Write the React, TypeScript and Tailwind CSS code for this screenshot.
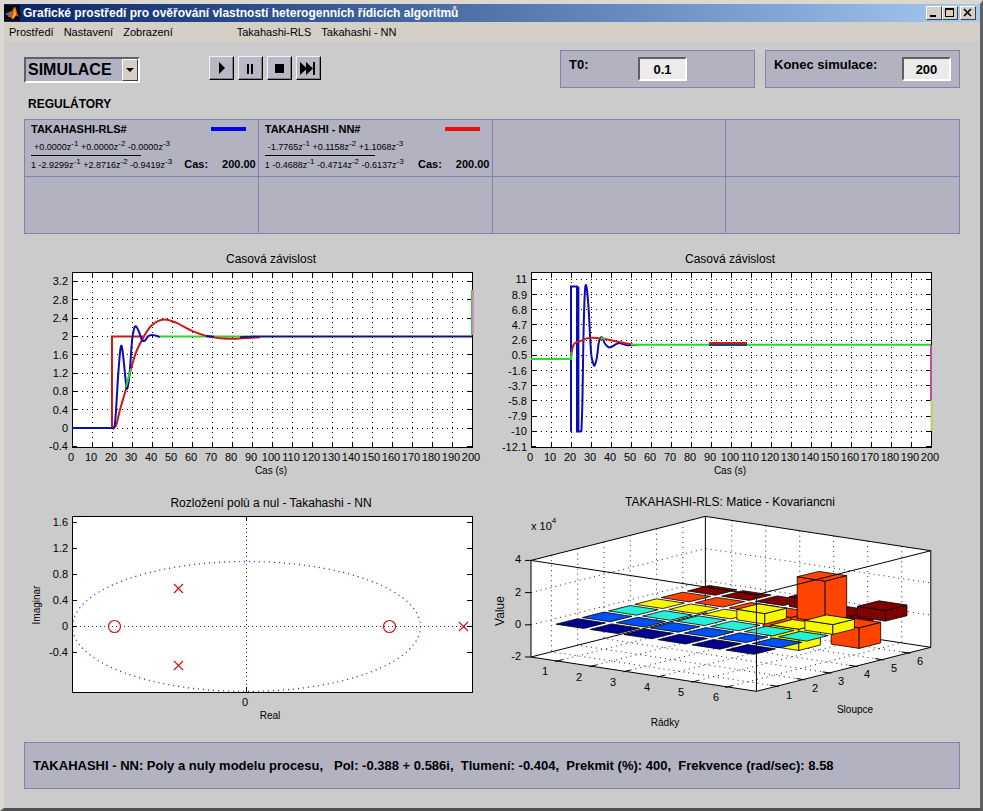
import type { ReactNode } from 'react';

type Point = [number, number];

const RED = '#d01818';
const BLUE = '#0c0cb4';
const GREEN = '#28d830';

const controllers = [
  {
    name: 'TAKAHASHI-RLS#',
    swatch: 'bg-[#0000f0]',
    numerator: ['+0.0000', ' +0.0000', ' -0.0000'],
    denominator: ['1 -2.9299', ' +2.8716', ' -0.9419'],
    time: '200.00',
  },
  {
    name: 'TAKAHASHI - NN#',
    swatch: 'bg-[#f00c0c]',
    numerator: ['-1.7765', ' +0.1158', ' +1.1068'],
    denominator: ['1 -0.4688', ' -0.4714', ' -0.6137'],
    time: '200.00',
  },
];

// Catmull-Rom spline through the given points
function curve(points: Point[]) {
  let d = `M${points[0][0]} ${points[0][1]}`;
  for (let i = 0; i < points.length - 1; i++) {
    const p0 = points[Math.max(i - 1, 0)];
    const p1 = points[i];
    const p2 = points[i + 1];
    const p3 = points[Math.min(i + 2, points.length - 1)];
    d += `C${p1[0] + (p2[0] - p0[0]) / 6} ${p1[1] + (p2[1] - p0[1]) / 6} ${p2[0] - (p3[0] - p1[0]) / 6} ${p2[1] - (p3[1] - p1[1]) / 6} ${p2[0]} ${p2[1]}`;
  }
  return d;
}

function line(points: Point[]) {
  return 'M' + points.map((p) => p.join(' ')).join('L');
}

function Polynomial({ terms }: { terms: string[] }) {
  return (
    <span className="whitespace-pre text-[9px] leading-3">
      {terms.map((term, i) => (
        <span key={i}>
          {term}z<sup className="text-[8px] leading-none">-{i + 1}</sup>
        </span>
      ))}
    </span>
  );
}

function ControllerCell({ controller }: { controller?: (typeof controllers)[number] }) {
  return (
    <div className="h-[57px] border-r border-b border-[#8282b2] px-1.5 pt-[3px]">
      {controller && (
        <>
          <div className="flex h-3 items-center justify-between pr-1.5 text-[11px] font-bold">
            <span>{controller.name}</span>
            <span className={`h-1 w-[35px] ${controller.swatch}`} />
          </div>
          <div className="mt-1 flex h-4 items-center pl-[3px]">
            <Polynomial terms={controller.numerator} />
          </div>
          <div className="h-px w-[110px] bg-black" />
          <div className="flex h-[17px] items-center justify-between">
            <Polynomial terms={controller.denominator} />
            <span className="-mr-1 flex gap-3.5 text-[11px] font-bold">
              <span>Cas:</span>
              <span>{controller.time}</span>
            </span>
          </div>
        </>
      )}
    </div>
  );
}

function TimeChart({
  left,
  zero,
  unit,
  ticks,
  children,
}: {
  left: number;
  zero: number;
  unit: number;
  ticks: number[];
  children: ReactNode;
}) {
  const seconds = Array.from({ length: 21 }, (_, i) => i * 10);
  return (
    <svg viewBox="0 0 468 236" className="block w-full" fontSize="11">
      <g transform={`translate(${left} 24)`}>
        <text x="199" y="-9" textAnchor="middle" fontSize="12">Casová závislost</text>
        <rect width="400" height="175" fill="#fff" />
        <g stroke="#000" shapeRendering="crispEdges">
          {seconds.slice(1, -1).map((s) => (
            <g key={s}>
              <path d={`M${s * 2 + 0.5} 0V175`} strokeDasharray="1 4" />
              <path d={`M${s * 2 + 0.5} 0v5M${s * 2 + 0.5} 170v5`} />
            </g>
          ))}
          {ticks.map((v) => {
            const y = Math.floor(zero - v * unit) + 0.5;
            return (
              <g key={v}>
                {y < 173 && <path d={`M0 ${y}H400`} strokeDasharray="1 4" />}
                <path d={`M0 ${y}h5M395 ${y}h5`} />
              </g>
            );
          })}
          <rect x="0.5" y="0.5" width="400" height="175" fill="none" />
        </g>
        {ticks.map((v) => (
          <text key={v} x="-4" y={Math.round(zero - v * unit) + 4} textAnchor="end">{v}</text>
        ))}
        {seconds.map((s) => (
          <text key={s} x={s * 2 - 1} y="189" textAnchor="middle">{s}</text>
        ))}
        <text x="199" y="202" textAnchor="middle" fontSize="10">Cas (s)</text>
        <g fill="none" strokeWidth="2">{children}</g>
      </g>
    </svg>
  );
}

function OutputChart() {
  const at = (points: Point[]): Point[] => points.map(([t, v]) => [t * 2, 156 - v * 45.8]);
  return (
    <TimeChart left={48} zero={156} unit={45.8} ticks={[3.2, 2.8, 2.4, 2, 1.6, 1.2, 0.8, 0.4, 0, -0.4]}>
      <path d={line(at([[20, 0], [20, 2], [36, 2]]))} stroke={RED} />
      <path d={line(at([[44, 2], [88, 2]]))} stroke={GREEN} />
      <path
        d={curve(at([[20, 0], [22, 0.05], [24, 0.4], [27, 0.85], [29, 1.2], [32, 1.65], [36, 2], [40, 2.25], [46, 2.37], [52, 2.3], [60, 2.12], [68, 2], [74, 1.96], [82, 1.95], [94, 1.98]]))}
        stroke={RED}
      />
      <path
        d={curve(at([[20, 0], [21.5, 0.1], [23, 1.1], [24.2, 1.72], [25, 1.76], [26, 1.4], [27.2, 0.9], [28, 0.92], [29, 1.3], [30, 1.9], [31, 2.16], [32, 2.22], [33.5, 2.1], [35, 1.92], [36.5, 1.91], [38, 2], [40, 2.03], [44, 1.99]]))}
        stroke={BLUE}
      />
      <path d={line(at([[27, 0.9], [29.5, 1.3]]))} stroke={GREEN} />
      <path d={line(at([[0, 0], [20, 0]]))} stroke={BLUE} />
      <path d={line(at([[67, 2.01], [71, 1.99]]))} stroke={BLUE} />
      <path d={line(at([[84, 1.98], [90, 2], [200, 2]]))} stroke="#101878" />
      <path d="M399.5 18V63" stroke={GREEN} strokeWidth="1" />
      <path d="M401 18V63" stroke="#c890b8" />
    </TimeChart>
  );
}

function InputChart() {
  const at = (points: Point[]): Point[] => points.map(([t, v]) => [t * 2, 87 - v * 7.24]);
  return (
    <TimeChart left={39} zero={87} unit={7.24} ticks={[11, 8.9, 6.8, 4.7, 2.6, 0.5, -1.6, -3.7, -5.8, -7.9, -10, -12.1]}>
      <path d={line(at([[20, -10], [20, 10], [23, 10], [23, -10], [25.2, -10]]))} stroke={BLUE} />
      <path d={line(at([[23.7, 10], [23.7, -10]]))} stroke={BLUE} />
      <path
        d={curve(at([[25.2, -10], [25.7, -6], [26.3, 4], [27, 9.5], [27.8, 9.9], [28.8, 7], [30, 1], [31, -0.5], [31.8, -0.9], [33, 0.3], [34, 2.4], [35.5, 3], [37, 2.1], [39, 1.6], [41, 1.8], [44, 2.2], [48, 1.9], [53, 1.97]]))}
        stroke={BLUE}
      />
      <path
        d={curve(at([[20, 0], [20.8, 1.6], [22, 2.2], [25, 2.5], [28, 2.85], [31, 2.95], [36, 2.8], [40, 2.6], [46, 2.25], [51, 2]]))}
        stroke={RED}
      />
      <path d={line(at([[0, 0], [20, 0], [20.3, 1]]))} stroke={GREEN} />
      <path d={line(at([[35, 2.9], [37, 2.8]]))} stroke={GREEN} />
      <path d={line(at([[50, 1.97], [200, 1.97]]))} stroke={GREEN} />
      <path d="M178 71H216" stroke={RED} />
      <path d="M178 73H216" stroke="#10487c" />
      <path d="M400 73V128" stroke="#c848a8" />
      <path d="M400.5 128V159" stroke="#c8c860" />
    </TimeChart>
  );
}

function PoleZeroChart() {
  const ticks = [1.6, 1.2, 0.8, 0.4, 0, -0.4];
  const poles: Point[] = [[106, 72], [106, 149], [391, 110]];
  return (
    <svg viewBox="0 0 468 250" className="block w-full" fontSize="11">
      <defs>
        <clipPath id="pole-area">
          <rect width="400" height="176" />
        </clipPath>
      </defs>
      <g transform="translate(48 32)">
        <text x="199" y="-9" textAnchor="middle" fontSize="12">Rozložení polù a nul - Takahashi - NN</text>
        <rect width="400" height="176" fill="#fff" />
        <g fill="none" stroke="#1c1cc8" clipPath="url(#pole-area)">
          <ellipse cx="174.5" cy="110.5" rx="174" ry="65" strokeDasharray="1 4" strokeWidth="1.3" />
          <path d="M0 110.5H400M174.5 0V176" strokeDasharray="1 3" shapeRendering="crispEdges" />
        </g>
        <g fill="none" stroke="#000" shapeRendering="crispEdges">
          {ticks.map((v) => (
            <path key={v} d={`M0 ${110.5 - v * 65}h5M395 ${110.5 - v * 65}h5`} />
          ))}
          <path d="M174.5 0v5M174.5 171v5" />
          <rect x="0.5" y="0.5" width="400" height="176" />
        </g>
        {ticks.map((v) => (
          <text key={v} x="-4" y={114 - v * 65} textAnchor="end">{v}</text>
        ))}
        <text x="173" y="190" textAnchor="middle">0</text>
        <text x="198" y="203" textAnchor="middle" fontSize="10">Real</text>
        <text transform="translate(-32 89) rotate(-90)" textAnchor="middle" fontSize="10">Imaginar</text>
        <g fill="none" stroke="#c41818" strokeWidth="1.2">
          <circle cx="42.5" cy="110.5" r="6" />
          <circle cx="317.5" cy="110.5" r="6" />
          {poles.map(([x, y]) => (
            <path key={`${x}-${y}`} d={`M${x - 4} ${y - 4}l9 9M${x + 5} ${y - 4}l-9 9`} />
          ))}
        </g>
      </g>
    </svg>
  );
}

const columnColors = ['#000090', '#0050f8', '#28f0d8', '#f8f800', '#ff4400', '#800000'];

// Covariance values that stand out of the zero plane, keyed by row-column
const covariance: Record<string, number> = {
  '4-4': 0.65,
  '4-5': -1.32,
  '5-4': -1.32,
  '4-6': 0.61,
  '6-4': 0.61,
  '5-5': 2.58,
  '5-6': -1.28,
  '6-5': -1.28,
  '6-6': 0.66,
};

function project(row: number, column: number, z: number): Point {
  return [39 + 34 * row + 26.3 * column, 173 + 5.18 * row - 6.64 * column - 16.1 * (z + 2)];
}

function polygon(points: Point[]) {
  return points.map(([x, y]) => `${x.toFixed(1)},${y.toFixed(1)}`).join(' ');
}

function Bar({ row, column }: { row: number; column: number }) {
  const z = covariance[`${row}-${column}`] ?? 0;
  const top = Math.max(z, 0);
  const bottom = Math.min(z, 0);
  const r = row - 0.175;
  const c = column - 0.175;
  const h = 0.41;
  return (
    <g fill={columnColors[column - 1]} stroke="#000" strokeWidth="0.8" strokeLinejoin="round">
      {z !== 0 && (
        <>
          <polygon points={polygon([project(r - h, c - h, top), project(r + h, c - h, top), project(r + h, c - h, bottom), project(r - h, c - h, bottom)])} />
          <polygon points={polygon([project(r + h, c - h, top), project(r + h, c + h, top), project(r + h, c + h, bottom), project(r + h, c - h, bottom)])} />
        </>
      )}
      <polygon points={polygon([project(r - h, c - h, top), project(r + h, c - h, top), project(r + h, c + h, top), project(r - h, c + h, top)])} />
    </g>
  );
}

function CovarianceChart() {
  const size = 6.63;
  const steps = [1, 2, 3, 4, 5, 6];
  const offset = 0.225;
  const rowLabels: Point[] = [[53, 191], [87, 197], [121, 202], [155, 207], [189, 212], [224, 217]];
  const columnLabels: Point[] = [[297, 215], [323, 208], [349, 201], [375, 194], [402, 188], [428, 181]];
  return (
    <svg viewBox="0 0 468 250" className="block w-full overflow-visible" fontSize="11">
      <text x="238" y="22" textAnchor="middle" fontSize="12">TAKAHASHI-RLS: Matice - Kovariancni</text>
      <polygon
        fill="#fff"
        points={polygon([project(0, 0, 4), project(0, size, 4), project(size, size, 4), project(size, size, -2), project(size, 0, -2), project(0, 0, -2)])}
      />
      <g fill="none" stroke="#222" strokeDasharray="1 4">
        {steps.map((n) => {
          const p = n - offset;
          return (
            <g key={n}>
              <path d={line([project(0, p, 4), project(0, p, -2), project(size, p, -2)])} />
              <path d={line([project(p, size, 4), project(p, size, -2), project(p, 0, -2)])} />
            </g>
          );
        })}
        {[0, 2].map((z) => (
          <path key={z} d={line([project(0, 0, z), project(0, size, z), project(size, size, z)])} />
        ))}
      </g>
      <g fill="none" stroke="#000">
        <path d={line([project(0, 0, 4), project(0, size, 4), project(size, size, 4), project(size, size, -2), project(0, size, -2), project(0, size, 4)])} />
        <path d={line([project(0, size, -2), project(0, 0, -2), project(size, 0, -2), project(size, size, -2)])} />
        {steps.map((n) => {
          const p = n - offset;
          return (
            <g key={n}>
              <path d={line([project(p, -0.08, -2), project(p, 0.2, -2)])} />
              <path d={line([project(size - 0.2, p, -2), project(size + 0.06, p, -2)])} />
            </g>
          );
        })}
      </g>
      {[6, 5, 4, 3, 2, 1].map((column) =>
        steps.map((row) => <Bar key={`${row}-${column}`} row={row} column={column} />),
      )}
      <g fill="none" stroke="#000">
        <path d={line([project(0, 0, -2), project(0, 0, 4), project(size, 0, 4), project(size, size, 4)])} />
        <path d={line([project(size, 0, 4), project(size, 0, -2)])} />
        {[4, 2, 0, -2].map((z) => (
          <path key={z} d={line([[33, project(0, 0, z)[1]], [39, project(0, 0, z)[1]]])} />
        ))}
      </g>
      {[4, 2, 0, -2].map((z) => (
        <text key={z} x="29" y={Math.round(project(0, 0, z)[1]) + 3} textAnchor="end">{z}</text>
      ))}
      {steps.map((n, i) => (
        <g key={n} textAnchor="middle">
          <text x={rowLabels[i][0]} y={rowLabels[i][1]}>{n}</text>
          <text x={columnLabels[i][0]} y={columnLabels[i][1]}>{n}</text>
        </g>
      ))}
      <text x="39" y="46">
        x 10
        <tspan dy="-7" fontSize="8">4</tspan>
      </text>
      <text transform="translate(12 127) rotate(-90)" textAnchor="middle" fontSize="12">Value</text>
      <text x="173" y="242" textAnchor="middle" fontSize="10">Rádky</text>
      <text x="363" y="229" textAnchor="middle" fontSize="10">Sloupce</text>
    </svg>
  );
}

function WindowButton({ label, children }: { label: string; children: ReactNode }) {
  return (
    <button
      aria-label={label}
      className="h-3.5 w-4 border border-t-white border-r-[#404040] border-b-[#404040] border-l-white bg-[#d4d0c8]"
    >
      <svg viewBox="0 0 14 12" className="block h-3 w-3.5" fill="none" stroke="#000" shapeRendering="crispEdges">
        {children}
      </svg>
    </button>
  );
}

function PlayerButton({ label, children }: { label: string; children: ReactNode }) {
  return (
    <button
      aria-label={label}
      className="h-6 w-[25px] border border-t-[#f0f0f8] border-r-black border-b-black border-l-[#f0f0f8] bg-[#b8b8c6] shadow-[inset_-1px_-1px_#80808c]"
    >
      <svg viewBox="0 0 23 22" className="block h-[22px] w-[23px]">{children}</svg>
    </button>
  );
}

function NumberField({ id, value }: { id: string; value: string }) {
  return (
    <input
      id={id}
      defaultValue={value}
      className="h-6 w-[49px] border-2 border-t-[#606060] border-r-white border-b-white border-l-[#606060] bg-[#ebebeb] text-center text-[13px] font-bold outline-none"
    />
  );
}

export default function App() {
  return (
    <div className="flex min-h-screen flex-col border-t-4 border-r-3 border-b-3 border-l-4 border-t-[#dcd8d0] border-r-[#606060] border-b-[#505050] border-l-[#dcd8d0] bg-[#cbcbcb] font-['Liberation_Sans',Arial,sans-serif] text-black">
      <header className="flex h-[18px] items-center bg-linear-to-r from-[#0a246a] to-[#a6caf0] pr-1">
        <svg viewBox="0 0 16 16" className="h-4 w-4">
          <rect width="16" height="16" fill="#0a0a14" />
          <path d="M1 9l4-2 2-1 2 3-3 3z" fill="#3878a8" />
          <path d="M6 8c2-1 3-6 5-6 1 1 2 6 4 10-2-1-3-2-4 0-1 2-2 3-3 2-1-2-2-2-4-2z" fill="#d85010" />
          <path d="M11 2c-1 3-1 6-3 11 2 1 3-2 4-3z" fill="#f8b030" />
        </svg>
        <h1 className="ml-[3px] flex-1 text-[12px] font-bold text-white">
          Grafické prostředí pro ověřování vlastností heterogenních řídicích algoritmů
        </h1>
        <div className="flex">
          <WindowButton label="Minimize">
            <path d="M3 9h6" strokeWidth="2" />
          </WindowButton>
          <WindowButton label="Maximize">
            <path d="M2.5 2.5h8v7h-8zM2 2.5h9" />
            <path d="M2 2h9" strokeWidth="2" />
          </WindowButton>
          <span className="w-0.5" />
          <WindowButton label="Close">
            <path d="M3 2l7 7M10 2l-7 7" strokeWidth="1.6" shapeRendering="auto" />
          </WindowButton>
        </div>
      </header>

      <nav className="flex h-5 items-center gap-2.5 bg-[#d4d0c8] pl-[5px] text-[11px]">
        <button>Prostředí</button>
        <button>Nastavení</button>
        <button>Zobrazení</button>
        <span className="w-11" />
        <button>Takahashi-RLS</button>
        <button>Takahashi - NN</button>
      </nav>

      <main className="pt-2 pr-5 pb-[19px] pl-5">
        <div className="flex h-[38px] items-start">
          <div className="relative mt-[7px] w-[116px]">
            <select
              aria-label="Režim"
              className="h-[26px] w-full appearance-none border-2 border-t-[#606068] border-r-white border-b-white border-l-[#606068] bg-[#b2b2c2] pl-0.5 text-[16px] leading-5 font-bold outline-none"
            >
              <option>SIMULACE</option>
            </select>
            <span className="pointer-events-none absolute top-0.5 right-0.5 flex h-[22px] w-4 items-center justify-center border border-t-white border-r-[#404040] border-b-[#404040] border-l-white bg-[#d4d0c8]">
              <svg viewBox="0 0 8 4" className="h-1 w-2">
                <path d="M0 0h8L4 4z" />
              </svg>
            </span>
          </div>

          <div className="mt-1.5 ml-[69px] flex gap-1">
            <PlayerButton label="Start">
              <path d="M9 5l6 6-6 6z" />
            </PlayerButton>
            <PlayerButton label="Pauza">
              <path d="M8 7h2v10H8zM12 7h2v10h-2z" />
            </PlayerButton>
            <PlayerButton label="Stop">
              <path d="M7 7h9v9H7z" />
            </PlayerButton>
            <PlayerButton label="Na konec">
              <path d="M3 5l7 6.500-7 6.500zM9 5l7 6.500-7 6.500zM16 5h2v13h-2z" />
            </PlayerButton>
          </div>

          <div className="ml-auto flex gap-2.5">
            <div className="flex h-[38px] w-[195px] items-start border border-[#8282b2] bg-[#b2b2c0] pt-1.5 pl-2">
              <label htmlFor="t0" className="w-[69px] text-[13px] leading-4 font-bold">T0:</label>
              <NumberField id="t0" value="0.1" />
            </div>
            <div className="flex h-[38px] w-[195px] items-start justify-between border border-[#8282b2] bg-[#b2b2c0] px-2 pt-1.5">
              <label htmlFor="end" className="text-[13px] leading-4 font-bold">Konec simulace:</label>
              <NumberField id="end" value="200" />
            </div>
          </div>
        </div>

        <h2 className="flex h-[31px] items-center pl-1 text-[12px] font-bold">REGULÁTORY</h2>

        <section className="grid grid-cols-4 border-t border-l border-[#8282b2] bg-[#b2b2c0]">
          {Array.from({ length: 8 }, (_, i) => (
            <ControllerCell key={i} controller={controllers[i]} />
          ))}
        </section>

        <section className="mt-3.5 grid grid-cols-2">
          <OutputChart />
          <InputChart />
          <PoleZeroChart />
          <CovarianceChart />
        </section>

        <footer className="mt-2 flex h-[47px] items-center border border-[#8282b2] bg-[#b2b2c0] pl-2 text-[13px] font-bold whitespace-pre">
          {'TAKAHASHI - NN: Poly a nuly modelu procesu,   Pol: -0.388 + 0.586i,  Tlumení: -0.404,  Prekmit (%): 400,  Frekvence (rad/sec): 8.58'}
        </footer>
      </main>
    </div>
  );
}
